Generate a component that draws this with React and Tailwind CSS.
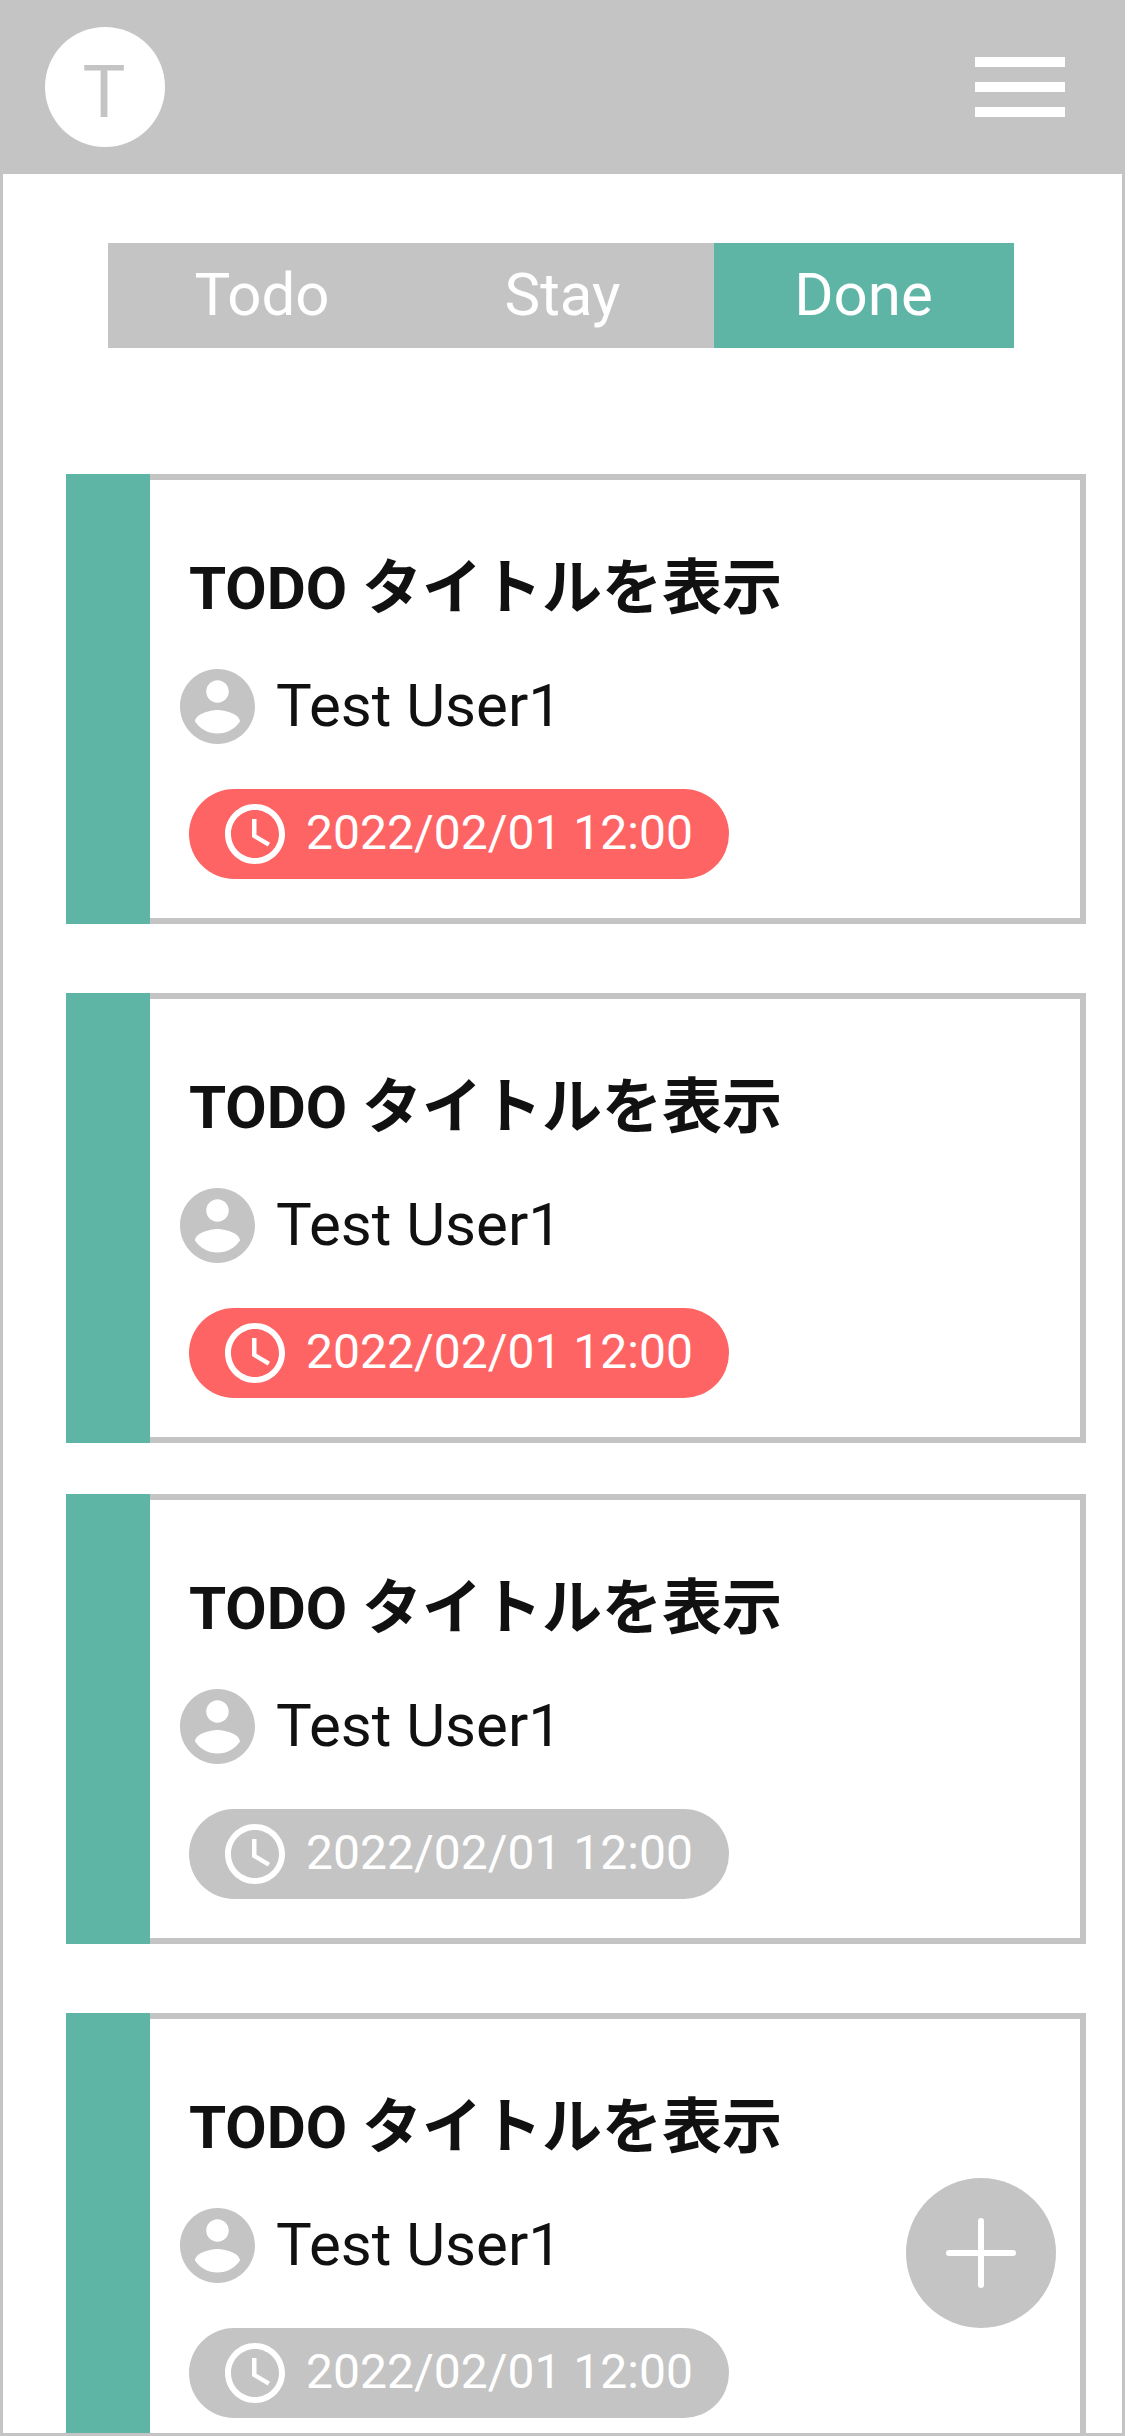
const tabs = [
  { label: "Todo", className: "w-[306px] pl-[2px] bg-[#c4c4c4]" },
  { label: "Stay", className: "w-[300px] pr-[3px] bg-[#c4c4c4]" },
  { label: "Done", className: "w-[300px] pr-[1px] bg-[#5eb5a6]" },
];

const todos = [
  { id: 1, overdue: true, spacing: "mt-[126px]" },
  { id: 2, overdue: true, spacing: "mt-[69px]" },
  { id: 3, overdue: false, spacing: "mt-[51px]" },
  { id: 4, overdue: false, spacing: "mt-[69px]" },
];

function AccountIcon() {
  return (
    <svg viewBox="2 2 20 20" className="size-[75px] shrink-0 fill-[#c4c4c4]">
      <path d="M12 2C6.48 2 2 6.48 2 12s4.48 10 10 10 10-4.48 10-10S17.52 2 12 2zm0 3c1.66 0 3 1.34 3 3s-1.34 3-3 3-3-1.34-3-3 1.34-3 3-3zm0 14.2c-2.5 0-4.71-1.28-6-3.22.03-1.99 4-3.08 6-3.08 1.99 0 5.97 1.09 6 3.08-1.29 1.94-3.5 3.22-6 3.22z" />
    </svg>
  );
}

function ClockIcon() {
  return (
    <svg viewBox="2 2 20 20" className="size-[60px] shrink-0 fill-white">
      <path d="M11.99 2C6.47 2 2 6.48 2 12s4.47 10 9.99 10C17.52 22 22 17.52 22 12S17.52 2 11.99 2zM12 20c-4.42 0-8-3.58-8-8s3.58-8 8-8 8 3.58 8 8-3.58 8-8 8z" />
      <path d="M12.5 7H11v6l5.25 3.15.75-1.23-4.5-2.67z" />
    </svg>
  );
}

function TodoCard({ overdue, spacing }) {
  return (
    <article className={`flex h-[450px] w-[1020px] shrink-0 ${spacing}`}>
      <div className="w-[84px] bg-[#5eb5a6]" />
      <div className="flex-1 border-y-6 border-r-6 border-[#c4c4c4] pt-[74px]">
        <h2 className="ml-[39px] text-[60px] leading-[70px] font-bold whitespace-nowrap">
          TODO タイトルを表示
        </h2>
        <div className="mt-[45px] ml-[30px] flex items-center">
          <AccountIcon />
          <span className="-mt-0.5 ml-[21px] text-[60px] leading-[70px]">Test User1</span>
        </div>
        <div
          className={`mt-[45px] ml-[39px] flex h-[90px] w-[540px] items-center rounded-full pl-9 text-white ${
            overdue ? "bg-[#ff6464]" : "bg-[#c4c4c4]"
          }`}
        >
          <ClockIcon />
          <time className="-mt-0.5 ml-[21px] text-[48px] leading-[56px] whitespace-nowrap">
            2022/02/01 12:00
          </time>
        </div>
      </div>
    </article>
  );
}

export default function App() {
  return (
    <div className="relative flex h-[2436px] w-[1125px] flex-col overflow-hidden border-3 border-[#c4c4c4] bg-white font-[Roboto,'Noto_Sans_CJK_JP',sans-serif] text-[#111111]">
      <header className="flex h-[171px] shrink-0 items-center justify-between bg-[#c4c4c4] pr-[57px] pb-[3px] pl-[42px]">
        <div className="flex size-[120px] items-center justify-center rounded-full bg-white pt-[11px] pr-[2px] text-[72px] leading-[84px] text-[#c4c4c4]">
          T
        </div>
        <button className="flex w-[90px] flex-col gap-[15px]" aria-label="Menu">
          <span className="h-2.5 w-full bg-white" />
          <span className="h-2.5 w-full bg-white" />
          <span className="h-2.5 w-full bg-white" />
        </button>
      </header>

      <nav className="mt-[69px] ml-[105px] flex h-[105px] shrink-0">
        {tabs.map((tab) => (
          <button
            key={tab.label}
            className={`flex items-center justify-center pb-0.5 text-[60px] leading-[70px] text-white ${tab.className}`}
          >
            {tab.label}
          </button>
        ))}
      </nav>

      <main className="flex flex-col pl-[63px]">
        {todos.map((todo) => (
          <TodoCard key={todo.id} overdue={todo.overdue} spacing={todo.spacing} />
        ))}
      </main>

      <button
        className="absolute right-[66px] bottom-[105px] flex size-[150px] items-center justify-center rounded-full bg-[#c4c4c4]"
        aria-label="Add"
      >
        <svg viewBox="0 0 70 70" className="size-[70px] stroke-white stroke-6 [stroke-linecap:round]">
          <path d="M35 3v64M3 35h64" />
        </svg>
      </button>
    </div>
  );
}
